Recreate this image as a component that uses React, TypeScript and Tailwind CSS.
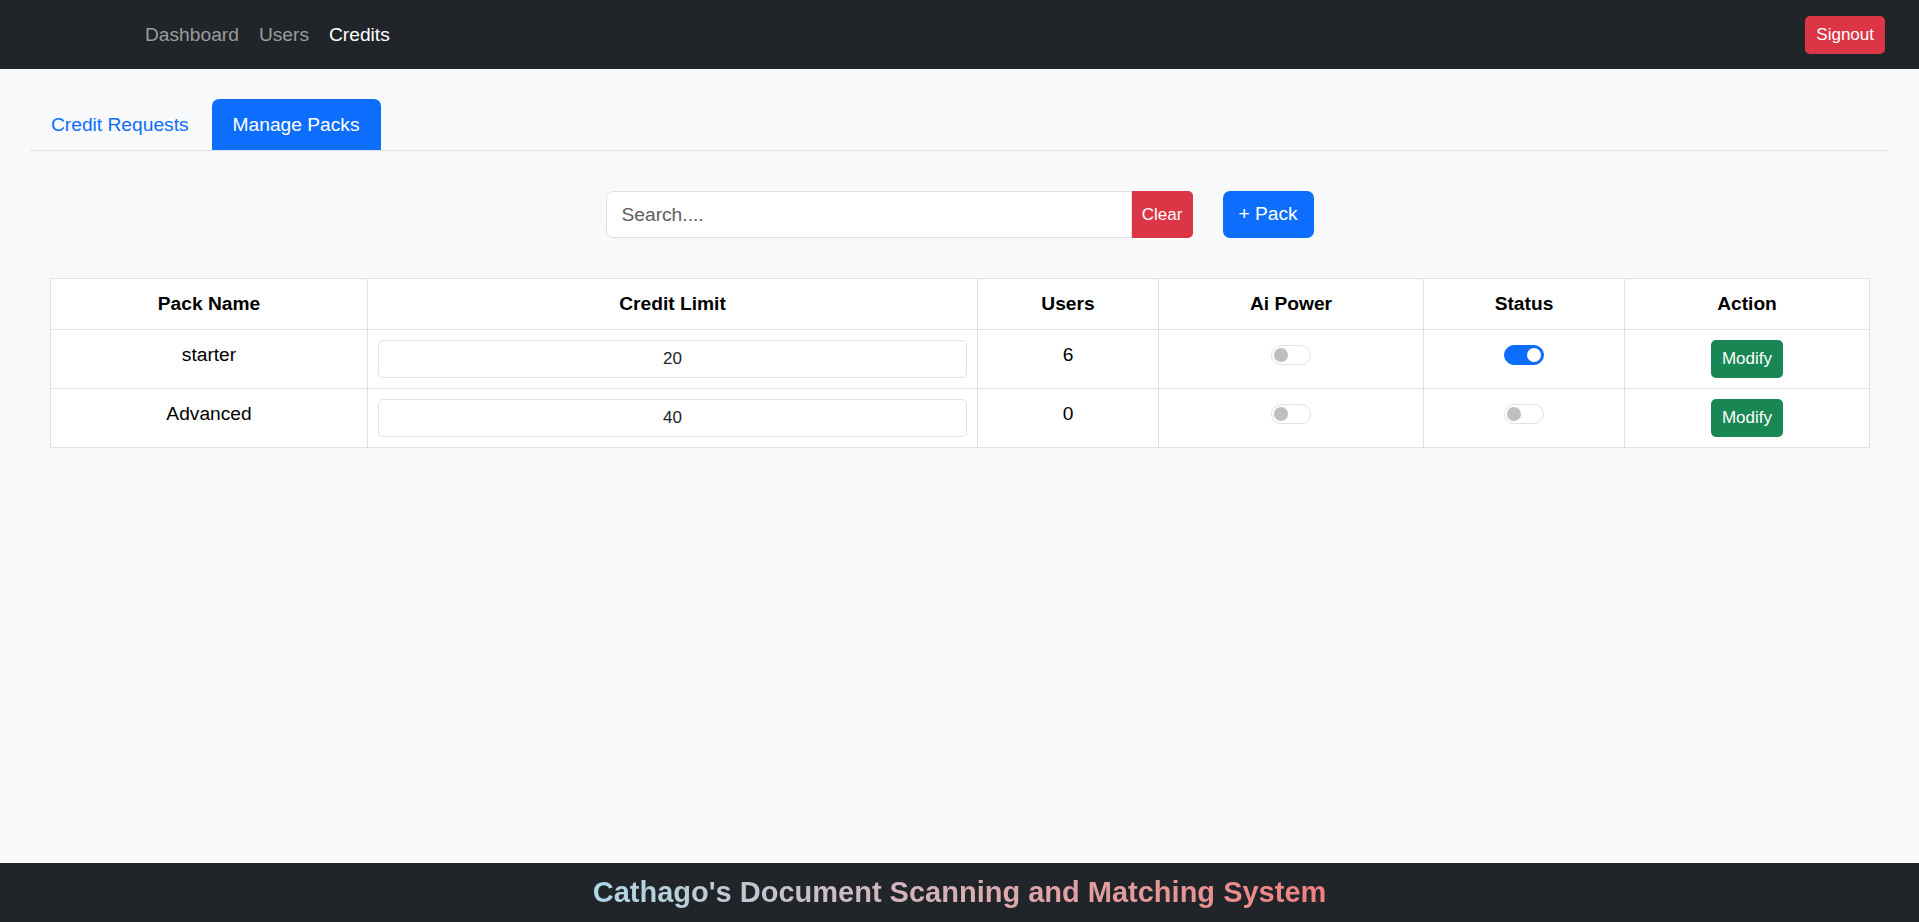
import { useState } from 'react';

type Pack = {
  name: string;
  limit: number;
  users: number;
  ai: boolean;
  active: boolean;
};

const initialPacks: Pack[] = [
  { name: 'starter', limit: 20, users: 6, ai: false, active: true },
  { name: 'Advanced', limit: 40, users: 0, ai: false, active: false },
];

const columns = [
  { title: 'Pack Name', width: 'w-[317px]' },
  { title: 'Credit Limit', width: 'w-[610px]' },
  { title: 'Users', width: 'w-[181px]' },
  { title: 'Ai Power', width: 'w-[265px]' },
  { title: 'Status', width: 'w-[201px]' },
  { title: 'Action', width: 'w-[245px]' },
];

const Switch = ({ on }: { on: boolean }) => (
  <span
    className={`mt-[5px] inline-flex h-5 w-10 items-center rounded-full border px-[2px] ${
      on ? 'justify-end border-[#0d6efd] bg-[#0d6efd]' : 'justify-start border-[#dee2e6] bg-white'
    }`}
  >
    <span className={`h-[14px] w-[14px] rounded-full ${on ? 'bg-white' : 'bg-[#bfbfbf]'}`} />
  </span>
);

export default function App() {
  const [packs] = useState(initialPacks);
  const [search, setSearch] = useState('');

  return (
    <div className="flex h-screen flex-col overflow-hidden bg-[#f8f9fa] font-['Liberation_Sans',Arial,sans-serif] text-[#212529]">
      {/* Navbar */}
      <nav className="flex h-[69px] shrink-0 items-center justify-between bg-[#212529] pl-[135px] pr-[34px]">
        <div className="flex items-center text-[19.2px] leading-[30px]">
          <a className="px-[10px] text-[#9a9c9e]">Dashboard</a>
          <a className="px-[10px] text-[#9a9c9e]">Users</a>
          <a className="px-[10px] text-white">Credits</a>
        </div>
        <button className="h-[38px] rounded-[5px] bg-[#dc3545] px-[11px] text-[17px] text-white">
          Signout
        </button>
      </nav>

      <main className="flex-1 px-[30px] pt-[30px]">
        {/* Tabs */}
        <div className="flex border-b border-[#dee2e6] text-[19.2px] leading-[30px]">
          <button className="h-[51px] px-[21px] text-[#0d6efd]">Credit Requests</button>
          <button className="ml-[2px] h-[51px] rounded-t-[7px] bg-[#0d6efd] px-[21px] text-white">
            Manage Packs
          </button>
        </div>

        {/* Search */}
        <div className="mt-[40px] flex justify-center gap-[30px]">
          <div className="flex">
            <input
              value={search}
              onChange={(e) => setSearch(e.target.value)}
              placeholder="Search...."
              className="h-[47px] w-[526px] rounded-l-[7px] border border-[#dee2e6] bg-white px-[15px] text-[19.2px] outline-none placeholder:text-[#5c6063]"
            />
            <button className="h-[47px] w-[61px] rounded-r-[5px] bg-[#dc3545] text-[17px] text-white">
              Clear
            </button>
          </div>
          <button className="h-[47px] w-[91px] rounded-[7px] bg-[#0d6efd] text-[19.2px] text-white">
            + Pack
          </button>
        </div>

        {/* Packs table */}
        <div className="mt-[40px] px-[20px]">
          <table className="w-full table-fixed border-collapse bg-white text-center text-[19.2px] leading-[30px]">
            <colgroup>
              {columns.map((c) => (
                <col key={c.title} className={c.width} />
              ))}
            </colgroup>
            <thead>
              <tr>
                {columns.map((c) => (
                  <th key={c.title} className="border border-[#dee2e6] p-[10px] font-bold text-black">
                    {c.title}
                  </th>
                ))}
              </tr>
            </thead>
            <tbody>
              {packs.map((p) => (
                <tr key={p.name}>
                  <td className="border border-[#dee2e6] p-[10px] align-top text-black">{p.name}</td>
                  <td className="border border-[#dee2e6] p-[10px] align-top">
                    <input
                      defaultValue={p.limit}
                      className="h-[38px] w-full rounded-[5px] border border-[#dee2e6] bg-white text-center text-[17px] outline-none"
                    />
                  </td>
                  <td className="border border-[#dee2e6] p-[10px] align-top text-black">{p.users}</td>
                  <td className="border border-[#dee2e6] p-[10px] align-top">
                    <Switch on={p.ai} />
                  </td>
                  <td className="border border-[#dee2e6] p-[10px] align-top">
                    <Switch on={p.active} />
                  </td>
                  <td className="border border-[#dee2e6] p-[10px] align-top">
                    <button className="h-[38px] rounded-[5px] bg-[#198754] px-[11px] text-[17px] text-white">
                      Modify
                    </button>
                  </td>
                </tr>
              ))}
            </tbody>
          </table>
        </div>
      </main>

      {/* Footer */}
      <footer className="flex h-[59px] shrink-0 items-center justify-center bg-[#212529]">
        <span className="bg-linear-to-r from-[#add8e6] to-[#f08080] bg-clip-text text-[29px] font-bold text-transparent">
          Cathago's Document Scanning and Matching System
        </span>
      </footer>
    </div>
  );
}
